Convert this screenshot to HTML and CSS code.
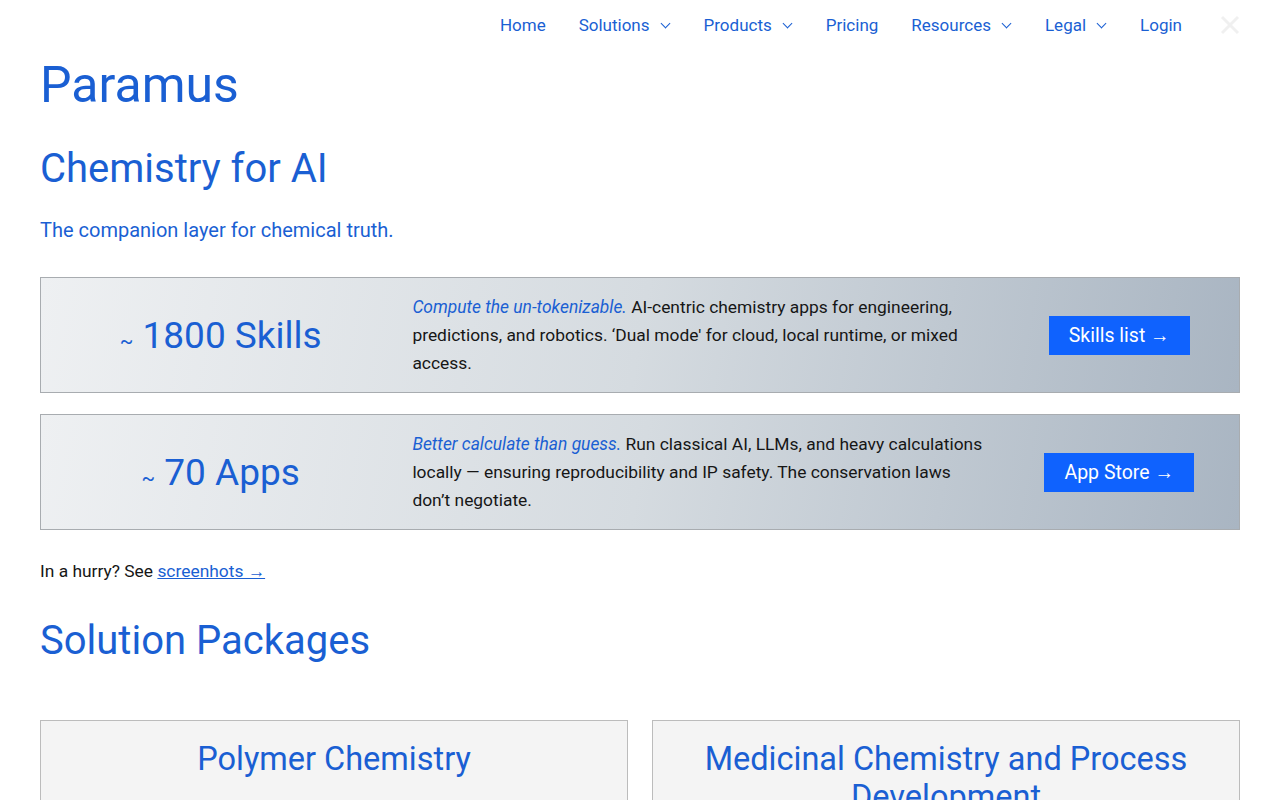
FILE: index.html
```html
<!DOCTYPE html>
<html lang="en">
<head>
    <meta charset="UTF-8">
    <meta name="viewport" content="width=device-width, initial-scale=1.0">
    <title>Paramus - Chemistry for AI</title>
    <link rel="stylesheet" href="styles.css">
</head>
<body>
    <header class="topbar">
        <nav class="nav">
            <a href="#" class="nav-item">Home</a>
            <a href="#" class="nav-item">Solutions <span class="chev"></span></a>
            <a href="#" class="nav-item">Products <span class="chev"></span></a>
            <a href="#" class="nav-item">Pricing</a>
            <a href="#" class="nav-item">Resources <span class="chev"></span></a>
            <a href="#" class="nav-item">Legal <span class="chev"></span></a>
            <a href="#" class="nav-item">Login</a>
        </nav>
        <svg class="close" width="20" height="20" viewBox="0 0 20 20">
            <path d="M2 2 L18 18 M18 2 L2 18" stroke="#f0f0f0" stroke-width="3" fill="none"/>
        </svg>
    </header>

    <main class="page">
        <h1 class="brand">Paramus</h1>
        <h2 class="title">Chemistry for AI</h2>
        <p class="tagline">The companion layer for chemical truth.</p>

        <div class="feature">
            <div class="stat"><span class="tilde">~</span> 1800 Skills</div>
            <p class="desc"><em>Compute the un-tokenizable.</em> AI-centric chemistry apps for engineering, predictions, and robotics. ‘Dual mode' for cloud, local runtime, or mixed access.</p>
            <div class="action"><a href="#" class="button">Skills list →</a></div>
        </div>

        <div class="feature">
            <div class="stat"><span class="tilde">~</span> 70 Apps</div>
            <p class="desc"><em>Better calculate than guess.</em> Run classical AI, LLMs, and heavy calculations locally — ensuring reproducibility and IP safety. The conservation laws don’t negotiate.</p>
            <div class="action"><a href="#" class="button">App Store →</a></div>
        </div>

        <p class="hurry">In a hurry? See <a href="#">screenhots →</a></p>

        <h2 class="section">Solution Packages</h2>

        <div class="packages">
            <div class="package"><h3>Polymer Chemistry</h3></div>
            <div class="package"><h3>Medicinal Chemistry and Process Development</h3></div>
        </div>
    </main>
</body>
</html>
```

FILE: styles.css
```css
body {
    margin: 0;
    font-family: Roboto, "Liberation Sans", sans-serif;
    color: #161616;
    background: #fff;
}
a {
    color: #1a5fd3;
}
.topbar {
    display: flex;
    justify-content: flex-end;
    align-items: center;
    height: 50px;
    padding: 0 40px;
}
.nav {
    display: flex;
    gap: 33px;
    margin-right: 38px;
}
.nav-item {
    font-size: 17px;
    color: #1a5fd3;
    text-decoration: none;
    display: flex;
    align-items: center;
}
.chev {
    display: inline-block;
    width: 6px;
    height: 6px;
    border-right: 1.5px solid #1a5fd3;
    border-bottom: 1.5px solid #1a5fd3;
    transform: rotate(45deg);
    margin: -4px 2px 0 12px;
}
.close {
    display: block;
}
.page {
    padding: 0 40px 40px;
}
.brand {
    font-size: 50px;
    font-weight: 400;
    color: #1a5fd3;
    margin: 6px 0 0;
}
.title {
    font-size: 40px;
    font-weight: 400;
    color: #1a5fd3;
    margin: 31px 0 0;
}
.tagline {
    font-size: 20px;
    color: #1a5fd3;
    margin: 26px 0 35px;
}
.feature {
    display: grid;
    grid-template-columns: 30% 50% 20%;
    align-items: center;
    height: 114px;
    border: 1px solid #a8acb0;
    background: linear-gradient(100deg, #eef0f2 0%, #d5dbe0 50%, #a9b5c2 100%);
    margin-bottom: 21px;
}
.stat {
    text-align: center;
    font-size: 37px;
    color: #1a5fd3;
}
.tilde {
    font-size: 20px;
}
.desc {
    font-size: 17.4px;
    line-height: 28px;
    margin: 0 0 0 12px;
    padding-right: 16px;
}
.desc em {
    color: #1a5fd3;
}
.action {
    text-align: center;
}
.button {
    display: inline-block;
    background: #0f62fe;
    color: #fff;
    font-size: 19.5px;
    text-decoration: none;
    padding: 8px 20px;
}
.hurry {
    font-size: 17.4px;
    margin: 31px 0 0;
}
.section {
    font-size: 40px;
    font-weight: 400;
    color: #1a5fd3;
    margin: 35px 0 56px;
}
.packages {
    display: grid;
    grid-template-columns: 1fr 1fr;
    gap: 24px;
}
.package {
    background: #f4f4f4;
    border: 1px solid #bcbcbc;
    padding: 19px 40px;
    min-height: 200px;
}
.package h3 {
    font-size: 32.5px;
    font-weight: 400;
    color: #1a5fd3;
    text-align: center;
    margin: 0;
    line-height: 38px;
}
```
